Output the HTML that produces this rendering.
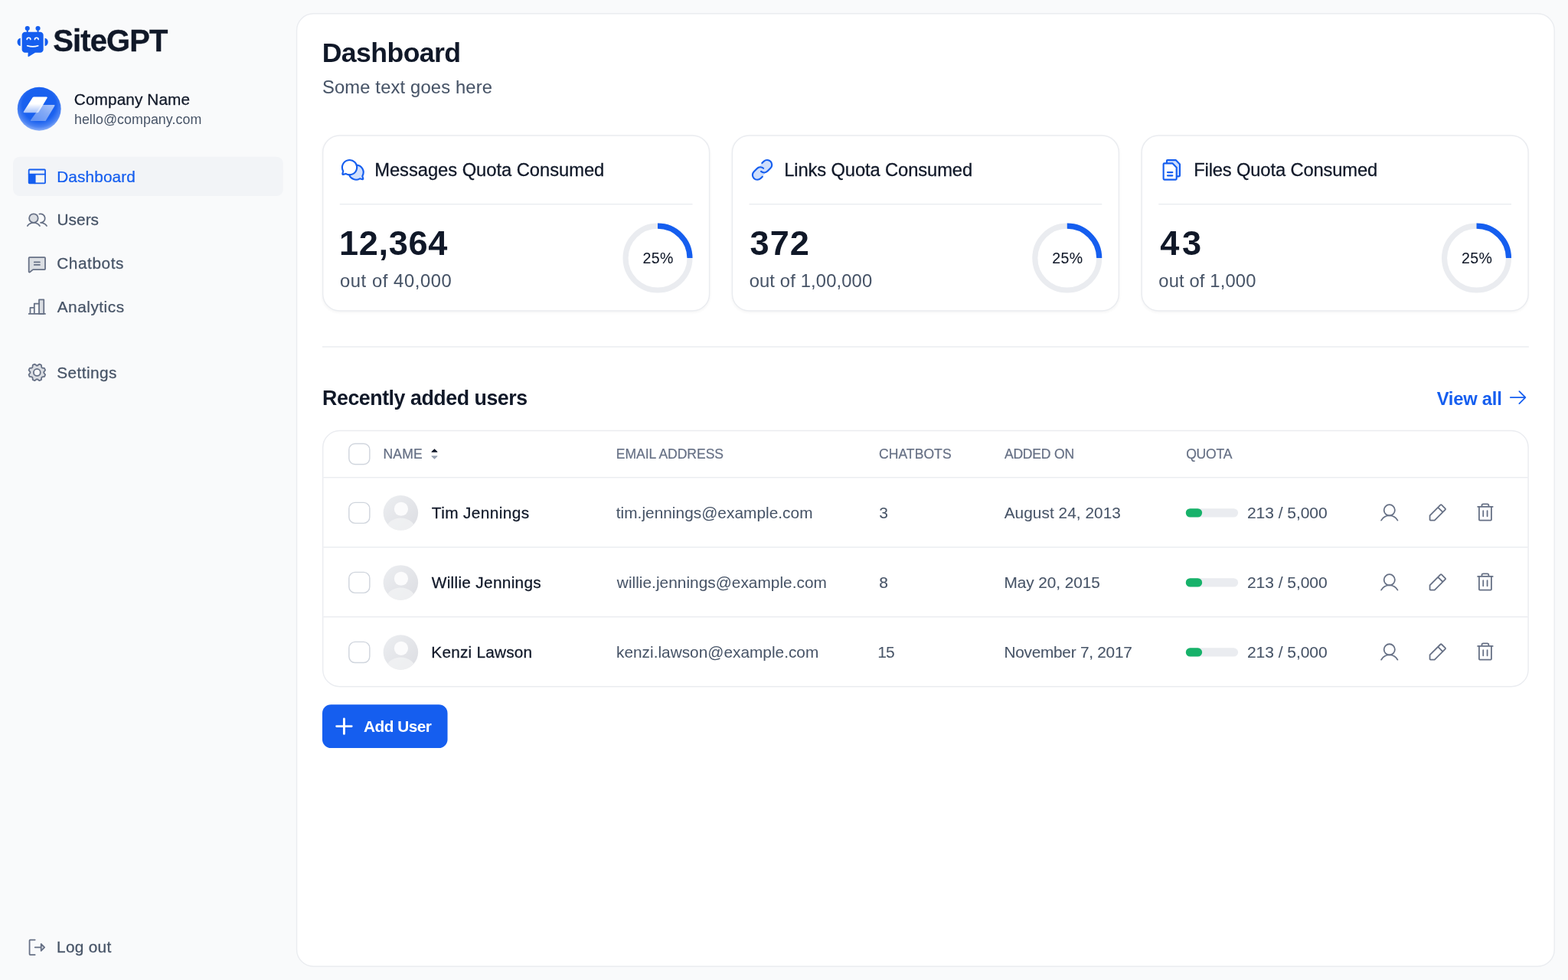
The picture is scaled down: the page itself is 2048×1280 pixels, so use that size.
<!DOCTYPE html>
<html lang="en">
<head>
<meta charset="utf-8">
<title>SiteGPT - Dashboard</title>
<style>
*{box-sizing:border-box;margin:0;padding:0}
html,body{width:2048px;height:1280px;overflow:hidden;background:#f9fafb;font-family:"Liberation Sans",sans-serif}
body{color:#101828}
#app{position:absolute;left:0;top:0;width:1440px;height:900px;transform:scale(1.4222222);transform-origin:0 0;will-change:transform}
svg{display:block;overflow:visible}
aside{position:absolute;left:0;top:0;width:272px;height:900px}
.brand{position:absolute;left:0;top:0;width:272px;height:64px}
.robot{position:absolute;left:16px;top:23px;width:32px;height:32px}
.org{position:absolute;left:0;top:80px;width:272px;height:40px}
.logo{position:absolute;left:16px;top:0;width:40px;height:40px}
nav a{position:absolute;left:12px;width:248px;height:36px;border-radius:6px;color:#667085;text-decoration:none}
nav a.on{background:#f2f4f7;color:#155eef}
.i20{position:absolute;left:12px;top:8px;width:20px;height:20px}
.i24{width:24px;height:24px}
main{position:absolute;left:272px;top:12px;width:1156px;height:876px;background:#fff;border:1px solid #eaecf0;border-radius:16px}
.card{position:absolute;top:111px;width:356px;height:162px;border:1px solid #eaecf0;border-radius:16px;background:#fff;box-shadow:0 1px 2px rgba(16,24,40,.03)}
.hd{position:absolute;left:0;top:0;width:354px;height:62px;color:#155eef}
.hd .i24{position:absolute;left:15px;top:19px}
.card hr{position:absolute;left:15px;right:15px;top:62px;border:0;border-top:1px solid #eaecf0}
.ring{position:absolute;right:15px;top:80px;width:64px;height:64px}
.ring svg{width:64px;height:64px}
.sep{position:absolute;left:23px;right:23px;top:305px;border-top:1px solid #eaecf0}
.viewall{position:absolute;right:23px;top:339px;width:100px;height:28px;color:#155eef;text-decoration:none}
.viewall .i20{position:absolute;left:auto;right:0;top:3px}
.tbl{position:absolute;left:23px;top:382px;width:1108px;height:236px;border:1px solid #eaecf0;border-radius:16px;background:#fff}
.tr{position:absolute;left:0;right:0;height:64px;border-top:1px solid #eaecf0}
.th{position:absolute;left:0;right:0;top:0;height:42px}
.sort{position:absolute;left:97px;top:13px;width:10px;height:16px}
.cb{position:absolute;left:23px;width:20px;height:20px;border:1px solid #d0d5dd;border-radius:6px;background:#fff}
.tr .cb{top:22px}.th .cb{top:11px}
.av{position:absolute;left:55px;top:16px;width:32px;height:32px}
.bar{position:absolute;left:792px;top:28px;width:48px;height:8px;border-radius:4px;background:#eaecf0}
.bar i{display:block;width:15.2px;height:8px;border-radius:4px;background:#17b26a}
.tr a{position:absolute;top:22px;width:20px;height:20px;color:#667085}
.act{width:20px;height:20px}
.a1{left:969px}.a2{left:1013px}.a3{left:1057px}
.btn{position:absolute;left:23px;top:634px;width:115px;height:40px;border-radius:8px;background:#155eef;color:#fff}
.btn .i20{left:10px;top:10px}
.bn{position:absolute;white-space:nowrap;left:48.775px;top:21.95px;line-height:32px;font-family:"Liberation Sans",sans-serif;font-size:28.1px;font-weight:700;letter-spacing:-0.629px;color:#101828;-webkit-text-stroke:0.25px #101828}
.cn{position:absolute;white-space:nowrap;left:68.104px;top:1px;line-height:20px;font-family:"Liberation Sans",sans-serif;font-size:14.63px;font-weight:400;letter-spacing:0.059px;color:#101828;-webkit-text-stroke:0.191px #101828}
.ce{position:absolute;white-space:nowrap;left:68.144px;top:21px;line-height:18px;font-family:"Liberation Sans",sans-serif;font-size:12.54px;font-weight:400;letter-spacing:0.045px;color:#475467}
.l1{position:absolute;white-space:nowrap;left:40.145px;top:0px;line-height:36px;font-family:"Liberation Sans",sans-serif;font-size:14.63px;font-weight:400;letter-spacing:0.085px;color:#155eef;-webkit-text-stroke:0.166px #155eef}
.l2{position:absolute;white-space:nowrap;left:40.453px;top:0px;line-height:36px;font-family:"Liberation Sans",sans-serif;font-size:14.63px;font-weight:400;letter-spacing:0.014px;color:#475467;-webkit-text-stroke:0.215px #475467}
.l3{position:absolute;white-space:nowrap;left:40.169px;top:0px;line-height:36px;font-family:"Liberation Sans",sans-serif;font-size:14.63px;font-weight:400;letter-spacing:0.41px;color:#475467;-webkit-text-stroke:0.179px #475467}
.l4{position:absolute;white-space:nowrap;left:40.5px;top:0px;line-height:36px;font-family:"Liberation Sans",sans-serif;font-size:14.63px;font-weight:400;letter-spacing:0.368px;color:#475467;-webkit-text-stroke:0.172px #475467}
.l5{position:absolute;white-space:nowrap;left:40.168px;top:0px;line-height:36px;font-family:"Liberation Sans",sans-serif;font-size:14.63px;font-weight:400;letter-spacing:0.319px;color:#475467;-webkit-text-stroke:0.189px #475467}
.l6{position:absolute;white-space:nowrap;left:40.066px;top:0px;line-height:36px;font-family:"Liberation Sans",sans-serif;font-size:14.63px;font-weight:400;letter-spacing:0.206px;color:#475467;-webkit-text-stroke:0.202px #475467}
h1{position:absolute;white-space:nowrap;left:22.775px;top:18.9px;line-height:32px;font-family:"Liberation Sans",sans-serif;font-size:25.08px;font-weight:700;letter-spacing:-0.421px;color:#101828}
.sub{position:absolute;white-space:nowrap;left:22.957px;top:55.9px;line-height:24px;font-family:"Liberation Sans",sans-serif;font-size:16.72px;font-weight:400;letter-spacing:0.113px;color:#475467;-webkit-text-stroke:0.04px #475467}
.ct1{position:absolute;white-space:nowrap;left:46.983px;top:20.07px;line-height:24px;font-family:"Liberation Sans",sans-serif;font-size:16.72px;font-weight:400;letter-spacing:-0.03px;color:#101828;-webkit-text-stroke:0.204px #101828}
.num1{position:absolute;white-space:nowrap;left:14.556px;top:79px;line-height:38px;font-family:"Liberation Sans",sans-serif;font-size:31.725px;font-weight:700;letter-spacing:0.461px;color:#101828}
.of1{position:absolute;white-space:nowrap;left:15.156px;top:122px;line-height:24px;font-family:"Liberation Sans",sans-serif;font-size:16.72px;font-weight:400;letter-spacing:0.416px;color:#475467;-webkit-text-stroke:0.04px #475467}
.ct2{position:absolute;white-space:nowrap;left:47.102px;top:20.07px;line-height:24px;font-family:"Liberation Sans",sans-serif;font-size:16.72px;font-weight:400;letter-spacing:-0.083px;color:#101828;-webkit-text-stroke:0.199px #101828}
.num2{position:absolute;white-space:nowrap;left:15.747px;top:79px;line-height:38px;font-family:"Liberation Sans",sans-serif;font-size:31.725px;font-weight:700;letter-spacing:0.71px;color:#101828}
.of2{position:absolute;white-space:nowrap;left:15.118px;top:122px;line-height:24px;font-family:"Liberation Sans",sans-serif;font-size:16.72px;font-weight:400;letter-spacing:0.102px;color:#475467;-webkit-text-stroke:0.014px #475467}
.ct3{position:absolute;white-space:nowrap;left:47.292px;top:20.07px;line-height:24px;font-family:"Liberation Sans",sans-serif;font-size:16.72px;font-weight:400;letter-spacing:-0.108px;color:#101828;-webkit-text-stroke:0.187px #101828}
.num3{position:absolute;white-space:nowrap;left:16.361px;top:79px;line-height:38px;font-family:"Liberation Sans",sans-serif;font-size:31.725px;font-weight:700;letter-spacing:2.538px;color:#101828}
.of3{position:absolute;white-space:nowrap;left:15.035px;top:122px;line-height:24px;font-family:"Liberation Sans",sans-serif;font-size:16.72px;font-weight:400;letter-spacing:0.102px;color:#475467;-webkit-text-stroke:0.005px #475467}
.pct{position:absolute;white-space:nowrap;left:18.318px;top:23px;line-height:20px;font-family:"Liberation Sans",sans-serif;font-size:13.748px;font-weight:400;letter-spacing:0.212px;color:#101828;-webkit-text-stroke:0.043px #101828}
h2{position:absolute;white-space:nowrap;left:23.089px;top:339px;line-height:28px;font-family:"Liberation Sans",sans-serif;font-size:18.81px;font-weight:700;letter-spacing:-0.309px;color:#101828}
.va{position:absolute;white-space:nowrap;left:15.521px;top:3px;line-height:24px;font-family:"Liberation Sans",sans-serif;font-size:16.72px;font-weight:700;letter-spacing:-0.157px;color:#155eef}
.h1{position:absolute;white-space:nowrap;left:54.958px;top:0px;line-height:42px;font-family:"Liberation Sans",sans-serif;font-size:12.36px;font-weight:400;letter-spacing:0.072px;color:#667085;-webkit-text-stroke:0.166px #667085}
.h2{position:absolute;white-space:nowrap;left:268.847px;top:0px;line-height:42px;font-family:"Liberation Sans",sans-serif;font-size:12.36px;font-weight:400;letter-spacing:-0.041px;color:#667085;-webkit-text-stroke:0.137px #667085}
.h3{position:absolute;white-space:nowrap;left:510.16px;top:0px;line-height:42px;font-family:"Liberation Sans",sans-serif;font-size:12.36px;font-weight:400;letter-spacing:0.026px;color:#667085;-webkit-text-stroke:0.17px #667085}
.h4{position:absolute;white-space:nowrap;left:625.427px;top:0px;line-height:42px;font-family:"Liberation Sans",sans-serif;font-size:12.36px;font-weight:400;letter-spacing:-0.16px;color:#667085;-webkit-text-stroke:0.161px #667085}
.h5{position:absolute;white-space:nowrap;left:792.249px;top:0px;line-height:42px;font-family:"Liberation Sans",sans-serif;font-size:12.36px;font-weight:400;letter-spacing:-0.14px;color:#667085;-webkit-text-stroke:0.153px #667085}
.nm1{position:absolute;white-space:nowrap;left:99.469px;top:1px;line-height:63px;font-family:"Liberation Sans",sans-serif;font-size:14.63px;font-weight:400;letter-spacing:0.274px;color:#101828;-webkit-text-stroke:0.192px #101828}
.em1{position:absolute;white-space:nowrap;left:268.826px;top:1px;line-height:63px;font-family:"Liberation Sans",sans-serif;font-size:14.63px;font-weight:400;letter-spacing:0.029px;color:#475467;-webkit-text-stroke:0.025px #475467}
.bt1{position:absolute;white-space:nowrap;left:510.422px;top:1px;line-height:63px;font-family:"Liberation Sans",sans-serif;font-size:14.805px;font-weight:400;letter-spacing:0px;color:#475467}
.dt1{position:absolute;white-space:nowrap;left:625.284px;top:1px;line-height:63px;font-family:"Liberation Sans",sans-serif;font-size:14.63px;font-weight:400;letter-spacing:0.031px;color:#475467;-webkit-text-stroke:0.028px #475467}
.nm2{position:absolute;white-space:nowrap;left:99.355px;top:1px;line-height:63px;font-family:"Liberation Sans",sans-serif;font-size:14.63px;font-weight:400;letter-spacing:0.218px;color:#101828;-webkit-text-stroke:0.201px #101828}
.em2{position:absolute;white-space:nowrap;left:269.614px;top:1px;line-height:63px;font-family:"Liberation Sans",sans-serif;font-size:14.63px;font-weight:400;letter-spacing:0.023px;color:#475467;-webkit-text-stroke:0.025px #475467}
.bt2{position:absolute;white-space:nowrap;left:510.282px;top:1px;line-height:63px;font-family:"Liberation Sans",sans-serif;font-size:14.805px;font-weight:400;letter-spacing:0px;color:#475467;-webkit-text-stroke:0.1px #475467}
.dt2{position:absolute;white-space:nowrap;left:625.063px;top:1px;line-height:63px;font-family:"Liberation Sans",sans-serif;font-size:14.63px;font-weight:400;letter-spacing:-0.033px;color:#475467;-webkit-text-stroke:0.065px #475467}
.nm3{position:absolute;white-space:nowrap;left:99.107px;top:1px;line-height:63px;font-family:"Liberation Sans",sans-serif;font-size:14.63px;font-weight:400;letter-spacing:0.146px;color:#101828;-webkit-text-stroke:0.177px #101828}
.em3{position:absolute;white-space:nowrap;left:269.025px;top:1px;line-height:63px;font-family:"Liberation Sans",sans-serif;font-size:14.63px;font-weight:400;letter-spacing:0.012px;color:#475467;-webkit-text-stroke:0.017px #475467}
.bt3{position:absolute;white-space:nowrap;left:509.001px;top:1px;line-height:63px;font-family:"Liberation Sans",sans-serif;font-size:14.805px;font-weight:400;letter-spacing:-0.74px;color:#475467}
.dt3{position:absolute;white-space:nowrap;left:625.097px;top:1px;line-height:63px;font-family:"Liberation Sans",sans-serif;font-size:14.63px;font-weight:400;letter-spacing:-0.177px;color:#475467;-webkit-text-stroke:0.064px #475467}
.qt{position:absolute;white-space:nowrap;left:848.361px;top:1px;line-height:63px;font-family:"Liberation Sans",sans-serif;font-size:14.805px;font-weight:400;letter-spacing:-0.042px;color:#475467;-webkit-text-stroke:0.054px #475467}
.bl{position:absolute;white-space:nowrap;left:37.984px;top:0px;line-height:40px;font-family:"Liberation Sans",sans-serif;font-size:14.63px;font-weight:700;letter-spacing:-0.357px;color:#fff}
</style>
</head>
<body>
<div id="app">
<aside>
  <div class="brand"><svg class="robot" viewBox="0.56 0.43 32 32">
<g fill="#155eef"><circle cx="9.7" cy="3.4" r="2.15"/><circle cx="19.4" cy="3.4" r="2.15"/><rect x="9" y="4" width="1.4" height="4"/><rect x="18.7" y="4" width="1.4" height="4"/>
<path d="M7.6 6.8h13.9a2.9 2.9 0 0 1 2.9 2.9v13.2a2.9 2.9 0 0 1-2.9 2.9h-4.6l-6 3.6a.45.45 0 0 1-.7-.4l.15-3.2H7.6a2.9 2.9 0 0 1-2.9-2.9V9.7a2.9 2.9 0 0 1 2.9-2.9z"/>
<path d="M3.38 12.35v7.3a2.97 3.65 0 0 1 0-7.3zM25.72 12.35a2.97 3.65 0 0 1 0 7.3z"/></g>
<g fill="none" stroke="#fff" stroke-linecap="round"><path d="M9.3 13.7a1.65 1.65 0 0 1 3.3 0M16.5 13.7a1.65 1.65 0 0 1 3.3 0" stroke-width="1.15"/><path d="M9.6 19.4Q14.6 21.1 19.6 19.4" stroke-width="1.1"/></g></svg><b class="bn">SiteGPT</b></div>
  <div class="org"><svg class="logo" viewBox="0 0 40 40"><defs>
<radialGradient id="og" cx=".5" cy=".4" r=".64"><stop offset="0" stop-color="#155eef"/><stop offset=".6" stop-color="#1a61ef"/><stop offset=".8" stop-color="#4a82f3"/><stop offset="1" stop-color="#a9c4fb"/></radialGradient>
<linearGradient id="p1" x1="0" y1="0" x2="0" y2="1"><stop offset="0" stop-color="#fff"/><stop offset=".45" stop-color="#fff"/><stop offset="1" stop-color="#fff" stop-opacity=".6"/></linearGradient>
<linearGradient id="p2" x1="0" y1="1" x2="1" y2="0"><stop offset="0" stop-color="#fff" stop-opacity=".3"/><stop offset=".55" stop-color="#fff" stop-opacity=".46"/><stop offset="1" stop-color="#fff" stop-opacity=".66"/></linearGradient></defs>
<circle cx="20" cy="20" r="20" fill="url(#og)"/>
<path d="M22.3 16.3h11.4a.6.6 0 0 1 .5.9l-8 13.3a1.2 1.2 0 0 1-1 .6H12.7a.6.6 0 0 1-.5-.9z" fill="url(#p2)"/>
<path d="M15.2 8.9h11.5a.7.7 0 0 1 .6 1.05l-7.7 12.9a1.4 1.4 0 0 1-1.2.7H6.3a.7.7 0 0 1-.6-1.05l8.3-13a1.4 1.4 0 0 1 1.2-.6z" fill="url(#p1)"/></svg><div class="cn">Company Name</div><div class="ce">hello@company.com</div></div>
  <nav>
    <a class="on" style="top:144px"><svg class="i20" viewBox="0 0 256 256" ><path d="M32 104h72v104H40a8 8 0 0 1-8-8z" fill="currentColor"/><rect x="32" y="48" width="192" height="160" rx="8" fill="none" stroke="currentColor" stroke-width="16" stroke-linecap="round" stroke-linejoin="round"/><path d="M32 104h192M104 104v104" fill="none" stroke="currentColor" stroke-width="16" stroke-linecap="round" stroke-linejoin="round"/></svg><span class="l l1">Dashboard</span></a>
    <a style="top:184px"><svg class="i20" viewBox="0 0 256 256" ><circle cx="88" cy="108" r="52" fill="currentColor" opacity=".2"/><circle cx="88" cy="108" r="52" fill="none" stroke="currentColor" stroke-width="16" stroke-linecap="round" stroke-linejoin="round"/><path d="M155.4 57.9A52 52 0 1 1 169.5 160M16 197.4a88 88 0 0 1 144 0M169.5 160a87.9 87.9 0 0 1 72 37.4" fill="none" stroke="currentColor" stroke-width="16" stroke-linecap="round" stroke-linejoin="round"/></svg><span class="l l2">Users</span></a>
    <a style="top:224px"><svg class="i20" viewBox="0 0 256 256" ><path d="M77.4 201.9l-32.3 27.2A8 8 0 0 1 32 223V64a8 8 0 0 1 8-8h176a8 8 0 0 1 8 8v128a8 8 0 0 1-8 8H82.5a7.8 7.8 0 0 0-5.1 1.9z" fill="currentColor" opacity=".2"/><path d="M77.4 201.9l-32.3 27.2A8 8 0 0 1 32 223V64a8 8 0 0 1 8-8h176a8 8 0 0 1 8 8v128a8 8 0 0 1-8 8H82.5a7.8 7.8 0 0 0-5.1 1.9z" fill="none" stroke="currentColor" stroke-width="16" stroke-linecap="round" stroke-linejoin="round"/><path d="M96 112h64M96 144h64" fill="none" stroke="currentColor" stroke-width="16" stroke-linecap="round" stroke-linejoin="round"/></svg><span class="l l3">Chatbots</span></a>
    <a style="top:264px"><svg class="i20" viewBox="0 0 256 256" ><rect x="152" y="40" width="56" height="168" fill="currentColor" opacity=".2"/><path d="M224 208H32M48 208v-72h48M96 208V88h56" fill="none" stroke="currentColor" stroke-width="16" stroke-linecap="round" stroke-linejoin="round"/><rect x="152" y="40" width="56" height="168" fill="none" stroke="currentColor" stroke-width="16" stroke-linecap="round" stroke-linejoin="round"/></svg><span class="l l4">Analytics</span></a>
    <a style="top:324px"><svg class="i20" viewBox="0 0 256 256" ><path d="M41.43,178.09A99.14,99.14,0,0,1,31.36,153.8l16.78-21a81.59,81.59,0,0,1,0-9.64l-16.77-21a99.43,99.43,0,0,1,10.05-24.3l26.71-3a81,81,0,0,1,6.81-6.81l3-26.7A99.14,99.14,0,0,1,102.2,31.36l21,16.78a81.59,81.59,0,0,1,9.64,0l21-16.77a99.43,99.43,0,0,1,24.3,10.05l3,26.71a81,81,0,0,1,6.81,6.81l26.7,3a99.14,99.14,0,0,1,10.07,24.29l-16.78,21a81.59,81.59,0,0,1,0,9.64l16.77,21a99.43,99.43,0,0,1-10,24.3l-26.71,3a81,81,0,0,1-6.81,6.81l-3,26.7a99.14,99.14,0,0,1-24.29,10.07l-21-16.78a81.59,81.59,0,0,1-9.64,0l-21,16.77a99.43,99.43,0,0,1-24.3-10l-3-26.71a81,81,0,0,1-6.81-6.81ZM128 168a40 40 0 1 1 40-40 40 40 0 0 1-40 40z" fill="currentColor" opacity=".2" fill-rule="evenodd"/><circle cx="128" cy="128" r="40" fill="none" stroke="currentColor" stroke-width="16" stroke-linecap="round" stroke-linejoin="round"/><path d="M41.43,178.09A99.14,99.14,0,0,1,31.36,153.8l16.78-21a81.59,81.59,0,0,1,0-9.64l-16.77-21a99.43,99.43,0,0,1,10.05-24.3l26.71-3a81,81,0,0,1,6.81-6.81l3-26.7A99.14,99.14,0,0,1,102.2,31.36l21,16.78a81.59,81.59,0,0,1,9.64,0l21-16.77a99.43,99.43,0,0,1,24.3,10.05l3,26.71a81,81,0,0,1,6.81,6.81l26.7,3a99.14,99.14,0,0,1,10.07,24.29l-16.78,21a81.59,81.59,0,0,1,0,9.64l16.77,21a99.43,99.43,0,0,1-10,24.3l-26.71,3a81,81,0,0,1-6.81,6.81l-3,26.7a99.14,99.14,0,0,1-24.29,10.07l-21-16.78a81.59,81.59,0,0,1-9.64,0l-21,16.77a99.43,99.43,0,0,1-24.3-10l-3-26.71a81,81,0,0,1-6.81-6.81Z" fill="none" stroke="currentColor" stroke-width="16" stroke-linecap="round" stroke-linejoin="round"/></svg><span class="l l5">Settings</span></a>
    <a style="top:852px"><svg class="i20" viewBox="0 0 256 256" ><path d="M176 88l40 40-40 40z" fill="currentColor" opacity=".2"/><path d="M104 128h72M176 88l40 40-40 40zM104 216H48a8 8 0 0 1-8-8V48a8 8 0 0 1 8-8h56" fill="none" stroke="currentColor" stroke-width="16" stroke-linecap="round" stroke-linejoin="round"/></svg><span class="l l6">Log out</span></a>
  </nav>
</aside>
<main>
  <h1>Dashboard</h1>
  <p class="sub">Some text goes here</p>

  <section class="card" style="left:23px">
    <div class="hd"><svg class="i24" viewBox="0 0 256 256" ><path d="M196.7 213.9l24.9 7.1a6 6 0 0 0 7.4-7.4l-7.1-24.9A72 72 0 0 0 163.9 80.1 72 72 0 0 1 92.1 175.9a72 72 0 0 0 104.6 38z" fill="currentColor" opacity=".2"/><path d="M34.1 140.7a72.1 72.1 0 1 1 25.2 25.2L34.4 173a6 6 0 0 1-7.4-7.4z" fill="none" stroke="currentColor" stroke-width="16" stroke-linecap="round" stroke-linejoin="round"/><path d="M92.1 175.9a71.9 71.9 0 0 0 104.6 38l24.9 7.1a6 6 0 0 0 7.4-7.4l-7.1-24.9A72 72 0 0 0 163.9 80.1" fill="none" stroke="currentColor" stroke-width="16" stroke-linecap="round" stroke-linejoin="round"/></svg><span class="ct ct1">Messages Quota Consumed</span></div>
    <hr>
    <div class="num num1">12,364</div>
    <div class="of of1">out of 40,000</div>
    <div class="ring"><svg viewBox="0 0 64 64"><circle cx="32" cy="32" r="29.5" fill="none" stroke="#eaecf0" stroke-width="5"/><path d="M32 2.5A29.5 29.5 0 0 1 61.5 32" fill="none" stroke="#155eef" stroke-width="5"/></svg><span class="pct">25%</span></div>
  </section>
  <section class="card" style="left:399px">
    <div class="hd"><svg class="i24" viewBox="0 0 256 256" ><g fill="currentColor" opacity=".2"><path d="M143.37 44.37A47 47 0 0 1 209.83 110.83L179.93 140.73A47 47 0 0 1 113.47 74.27z"/><path transform="rotate(180 128 128)" d="M143.37 44.37A47 47 0 0 1 209.83 110.83L179.93 140.73A47 47 0 0 1 113.47 74.27z"/></g><path d="M125.9 61.83L143.37 44.37A47 47 0 0 1 209.83 110.83L179.93 140.73A47 47 0 0 1 116.49 143.5" fill="none" stroke="currentColor" stroke-width="16" stroke-linecap="round" stroke-linejoin="round"/><path transform="rotate(180 128 128)" d="M125.9 61.83L143.37 44.37A47 47 0 0 1 209.83 110.83L179.93 140.73A47 47 0 0 1 116.49 143.5" fill="none" stroke="currentColor" stroke-width="16" stroke-linecap="round" stroke-linejoin="round"/></svg><span class="ct ct2">Links Quota Consumed</span></div>
    <hr>
    <div class="num num2">372</div>
    <div class="of of2">out of 1,00,000</div>
    <div class="ring"><svg viewBox="0 0 64 64"><circle cx="32" cy="32" r="29.5" fill="none" stroke="#eaecf0" stroke-width="5"/><path d="M32 2.5A29.5 29.5 0 0 1 61.5 32" fill="none" stroke="#155eef" stroke-width="5"/></svg><span class="pct">25%</span></div>
  </section>
  <section class="card" style="left:775px">
    <div class="hd"><svg class="i24" viewBox="0 0 256 256" ><path d="M168 32H88a8 8 0 0 0-8 8v24h56l40 40v88h24a8 8 0 0 0 8-8V72z" fill="currentColor" opacity=".2"/><path d="M168 224H56a8 8 0 0 1-8-8V72a8 8 0 0 1 8-8h80l40 40v112a8 8 0 0 1-8 8zM80 64V40a8 8 0 0 1 8-8h80l40 40v112a8 8 0 0 1-8 8h-24M88 152h48M88 184h48" fill="none" stroke="currentColor" stroke-width="16" stroke-linecap="round" stroke-linejoin="round"/></svg><span class="ct ct3">Files Quota Consumed</span></div>
    <hr>
    <div class="num num3">43</div>
    <div class="of of3">out of 1,000</div>
    <div class="ring"><svg viewBox="0 0 64 64"><circle cx="32" cy="32" r="29.5" fill="none" stroke="#eaecf0" stroke-width="5"/><path d="M32 2.5A29.5 29.5 0 0 1 61.5 32" fill="none" stroke="#155eef" stroke-width="5"/></svg><span class="pct">25%</span></div>
  </section>

  <div class="sep"></div>
  <h2>Recently added users</h2>
  <a class="viewall"><span class="va">View all</span><svg class="i20" viewBox="0 0 256 256" ><path d="M40 128h176M144 56l72 72-72 72" fill="none" stroke="currentColor" stroke-width="16" stroke-linecap="round" stroke-linejoin="round"/></svg></a>

  <div class="tbl">
    <div class="th">
      <i class="cb"></i>
      <span class="h h1">NAME</span><svg class="sort" viewBox="0 0 10 16"><path d="M5 3.5L7.6 6H2.4z" fill="#101828" stroke="#101828" stroke-width=".6" stroke-linejoin="round"/><path d="M5 12.4L2.4 9.9h5.2z" fill="#98a2b3" stroke="#98a2b3" stroke-width=".6" stroke-linejoin="round"/></svg>
      <span class="h h2">EMAIL ADDRESS</span>
      <span class="h h3">CHATBOTS</span>
      <span class="h h4">ADDED ON</span>
      <span class="h h5">QUOTA</span>
    </div>
    <div class="tr" style="top:42px">
      <i class="cb"></i><svg class="av" viewBox="0 0 32 32"><defs><linearGradient id="avg" x1="0" y1="0" x2="1" y2="1"><stop offset="0" stop-color="#eceef1"/><stop offset="1" stop-color="#dcdde2"/></linearGradient><clipPath id="avc"><circle cx="16" cy="16" r="16"/></clipPath></defs>
<circle cx="16" cy="16" r="16" fill="url(#avg)"/><g clip-path="url(#avc)"><ellipse cx="16" cy="31.5" rx="13.5" ry="10.8" fill="#f1f2f4" opacity=".8"/><circle cx="16.4" cy="12.4" r="6.4" fill="#fbfbfc"/></g></svg>
      <span class="nm nm1">Tim Jennings</span>
      <span class="em em1">tim.jennings@example.com</span>
      <span class="bt bt1">3</span>
      <span class="dt dt1">August 24, 2013</span>
      <div class="bar"><i></i></div>
      <span class="qt">213 / 5,000</span>
      <a class="a1"><svg class="act" viewBox="0 0 256 256" ><circle cx="128" cy="96" r="64" fill="none" stroke="currentColor" stroke-width="16" stroke-linecap="round" stroke-linejoin="round"/><path d="M32 216c19.4-33.5 54.6-56 96-56s76.6 22.5 96 56" fill="none" stroke="currentColor" stroke-width="16" stroke-linecap="round" stroke-linejoin="round"/></svg></a><a class="a2"><svg class="act" viewBox="0 0 256 256" ><path d="M92.7 216H48a8 8 0 0 1-8-8v-44.7a8 8 0 0 1 2.3-5.6L165.7 34.3a8 8 0 0 1 11.3 0L221.7 79a8 8 0 0 1 0 11.3L98.3 213.7a8 8 0 0 1-5.6 2.3zM136 64l56 56" fill="none" stroke="currentColor" stroke-width="16" stroke-linecap="round" stroke-linejoin="round"/></svg></a><a class="a3"><svg class="act" viewBox="0 0 256 256" ><path d="M216 56H40M104 104v64M152 104v64M200 56v152a8 8 0 0 1-8 8H64a8 8 0 0 1-8-8V56M168 56V40a16 16 0 0 0-16-16h-48a16 16 0 0 0-16 16v16" fill="none" stroke="currentColor" stroke-width="16" stroke-linecap="round" stroke-linejoin="round"/></svg></a>
    </div>
    <div class="tr" style="top:106px">
      <i class="cb"></i><svg class="av" viewBox="0 0 32 32"><circle cx="16" cy="16" r="16" fill="url(#avg)"/><g clip-path="url(#avc)"><ellipse cx="16" cy="31.5" rx="13.5" ry="10.8" fill="#f1f2f4" opacity=".8"/><circle cx="16.4" cy="12.4" r="6.4" fill="#fbfbfc"/></g></svg>
      <span class="nm nm2">Willie Jennings</span>
      <span class="em em2">willie.jennings@example.com</span>
      <span class="bt bt2">8</span>
      <span class="dt dt2">May 20, 2015</span>
      <div class="bar"><i></i></div>
      <span class="qt">213 / 5,000</span>
      <a class="a1"><svg class="act" viewBox="0 0 256 256" ><circle cx="128" cy="96" r="64" fill="none" stroke="currentColor" stroke-width="16" stroke-linecap="round" stroke-linejoin="round"/><path d="M32 216c19.4-33.5 54.6-56 96-56s76.6 22.5 96 56" fill="none" stroke="currentColor" stroke-width="16" stroke-linecap="round" stroke-linejoin="round"/></svg></a><a class="a2"><svg class="act" viewBox="0 0 256 256" ><path d="M92.7 216H48a8 8 0 0 1-8-8v-44.7a8 8 0 0 1 2.3-5.6L165.7 34.3a8 8 0 0 1 11.3 0L221.7 79a8 8 0 0 1 0 11.3L98.3 213.7a8 8 0 0 1-5.6 2.3zM136 64l56 56" fill="none" stroke="currentColor" stroke-width="16" stroke-linecap="round" stroke-linejoin="round"/></svg></a><a class="a3"><svg class="act" viewBox="0 0 256 256" ><path d="M216 56H40M104 104v64M152 104v64M200 56v152a8 8 0 0 1-8 8H64a8 8 0 0 1-8-8V56M168 56V40a16 16 0 0 0-16-16h-48a16 16 0 0 0-16 16v16" fill="none" stroke="currentColor" stroke-width="16" stroke-linecap="round" stroke-linejoin="round"/></svg></a>
    </div>
    <div class="tr" style="top:170px">
      <i class="cb"></i><svg class="av" viewBox="0 0 32 32"><circle cx="16" cy="16" r="16" fill="url(#avg)"/><g clip-path="url(#avc)"><ellipse cx="16" cy="31.5" rx="13.5" ry="10.8" fill="#f1f2f4" opacity=".8"/><circle cx="16.4" cy="12.4" r="6.4" fill="#fbfbfc"/></g></svg>
      <span class="nm nm3">Kenzi Lawson</span>
      <span class="em em3">kenzi.lawson@example.com</span>
      <span class="bt bt3">15</span>
      <span class="dt dt3">November 7, 2017</span>
      <div class="bar"><i></i></div>
      <span class="qt">213 / 5,000</span>
      <a class="a1"><svg class="act" viewBox="0 0 256 256" ><circle cx="128" cy="96" r="64" fill="none" stroke="currentColor" stroke-width="16" stroke-linecap="round" stroke-linejoin="round"/><path d="M32 216c19.4-33.5 54.6-56 96-56s76.6 22.5 96 56" fill="none" stroke="currentColor" stroke-width="16" stroke-linecap="round" stroke-linejoin="round"/></svg></a><a class="a2"><svg class="act" viewBox="0 0 256 256" ><path d="M92.7 216H48a8 8 0 0 1-8-8v-44.7a8 8 0 0 1 2.3-5.6L165.7 34.3a8 8 0 0 1 11.3 0L221.7 79a8 8 0 0 1 0 11.3L98.3 213.7a8 8 0 0 1-5.6 2.3zM136 64l56 56" fill="none" stroke="currentColor" stroke-width="16" stroke-linecap="round" stroke-linejoin="round"/></svg></a><a class="a3"><svg class="act" viewBox="0 0 256 256" ><path d="M216 56H40M104 104v64M152 104v64M200 56v152a8 8 0 0 1-8 8H64a8 8 0 0 1-8-8V56M168 56V40a16 16 0 0 0-16-16h-48a16 16 0 0 0-16 16v16" fill="none" stroke="currentColor" stroke-width="16" stroke-linecap="round" stroke-linejoin="round"/></svg></a>
    </div>
  </div>

  <div class="btn"><svg class="i20" viewBox="0 0 256 256" ><path d="M40 128h176M128 40v176" fill="none" stroke="currentColor" stroke-width="26" stroke-linecap="round" stroke-linejoin="round"/></svg><span class="bl">Add User</span></div>
</main>
</div>
</body>
</html>
